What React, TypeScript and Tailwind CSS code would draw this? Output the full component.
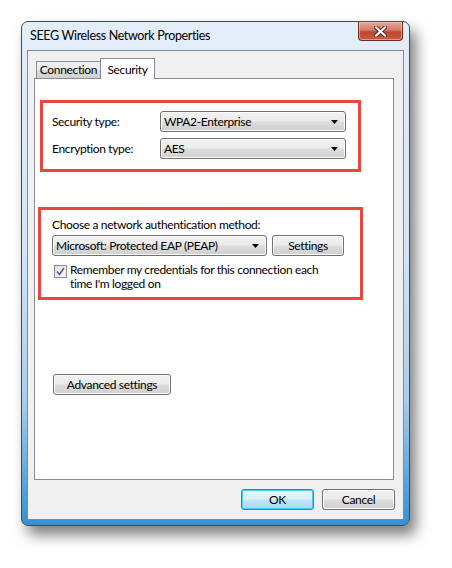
import React from "react";

const font = { fontFamily: 'Lato, "Noto Sans", "Liberation Sans", sans-serif' };

function Arrow() {
  return (
    <svg width="7" height="4" viewBox="0 0 7 4" className="shrink-0">
      <path d="M0 0h7L3.5 4z" fill="#000" />
    </svg>
  );
}

function Combo({ value, width }: { value: string; width: string }) {
  return (
    <div
      className={`${width} h-[21px] flex items-center justify-between pl-[3px] pr-[7px] border border-[#707070] rounded-[3px] bg-[linear-gradient(to_bottom,#f2f2f2_0%,#ebebeb_48%,#dddddd_52%,#cfcfcf_100%)] shadow-[inset_0_0_0_1px_#fcfcfc] text-[12px] text-black`}
    >
      <span>{value}</span>
      <Arrow />
    </div>
  );
}

function Button({ label, width, primary }: { label: string; width: string; primary?: boolean }) {
  return (
    <div
      className={`${width} h-[21px] flex items-center justify-center border rounded-[3px] text-[12px] text-black ${
        primary
          ? "border-[#3c7fb1] bg-[linear-gradient(to_bottom,#eaf6fd_0%,#d9f0fc_48%,#bee6fd_52%,#a7d9f5_100%)] shadow-[inset_0_0_0_1px_#48d1f8]"
          : "border-[#707070] bg-[linear-gradient(to_bottom,#f2f2f2_0%,#ebebeb_48%,#dddddd_52%,#cfcfcf_100%)] shadow-[inset_0_0_0_1px_#fcfcfc]"
      }`}
    >
      {label}
    </div>
  );
}

export default function App() {
  return (
    <div className="w-[452px] h-[568px] bg-white pt-[21px] pl-[21px] tracking-[-0.35px]" style={font}>
      <div className="w-[389px] h-[505px] flex flex-col border border-[#3d4a57] rounded-[7px] bg-[linear-gradient(to_bottom,#e4eef9_0%,#d3e5f5_45%,#a9cdeb_75%,#4d9fd9_94%,#3a90d0_100%)] shadow-[6px_9px_14px_rgba(0,0,0,0.5)]">
        {/* title bar */}
        <div className="h-[28px] flex items-start justify-between pl-[8px] pr-[6px]">
          <div className="pt-[6px] text-[12.5px] leading-[15px] text-black">SEEG Wireless Network Properties</div>
          <div className="w-[45px] h-[19px] flex items-center justify-center rounded-b-[4px] border border-t-0 border-[#6c2a20] bg-[linear-gradient(to_bottom,#e8a698_0%,#d37a66_45%,#c0462f_55%,#c85a3f_100%)] shadow-[inset_0_0_0_1px_rgba(255,220,210,0.5)]">
            <svg width="13" height="11" viewBox="0 0 13 11">
              <path d="M2 1.5l9 8M11 1.5l-9 8" stroke="#4a2a26" strokeWidth="4" strokeLinecap="square" />
              <path d="M2 1.5l9 8M11 1.5l-9 8" stroke="#ffffff" strokeWidth="2.2" strokeLinecap="square" />
            </svg>
          </div>
        </div>

        {/* client area */}
        <div className="mx-[5px] mb-[5px] flex-1 flex flex-col border border-[#7f8a96] bg-[#f0f0f0] px-[6px] pt-[7px]">
          <div className="flex items-end pl-[2px] h-[20px]">
            <div className="w-[65px] h-[17px] flex items-center justify-center border border-b-0 border-[#898c95] bg-[linear-gradient(to_bottom,#f2f2f2_0%,#ebebeb_50%,#dddddd_51%,#cfcfcf_100%)] text-[12px] text-black">
              Connection
            </div>
            <div className="relative z-10 -mb-px -ml-px w-[55px] h-[21px] flex items-start justify-center pt-[2px] border border-b-0 border-[#898c95] bg-white text-[12px] text-black">
              Security
            </div>
          </div>

          <div className="w-[360px] h-[402px] border border-[#898c95] bg-white flex flex-col pt-[21px]">
            <div className="ml-[5px] w-[321px] h-[72px] border-[3px] border-[#e8473f] flex flex-col gap-[6px] pt-[8px]">
              <div className="flex items-center">
                <div className="w-[117px] pl-[9px] text-[12px] text-black">Security type:</div>
                <Combo value="WPA2-Enterprise" width="w-[186px]" />
              </div>
              <div className="flex items-center">
                <div className="w-[117px] pl-[9px] text-[12px] text-black">Encryption type:</div>
                <Combo value="AES" width="w-[186px]" />
              </div>
            </div>

            <div className="ml-[3px] mt-[35px] w-[325px] h-[93px] border-[3px] border-[#e8473f] flex flex-col pl-[11px] pt-[6px]">
              <div className="text-[12px] text-black leading-[17px]">Choose a network authentication method:</div>
              <div className="flex items-center gap-[5px] mt-[2px]">
                <Combo value="Microsoft: Protected EAP (PEAP)" width="w-[215px]" />
                <Button label="Settings" width="w-[72px]" />
              </div>
              <div className="flex items-start mt-[7px] pl-[2px]">
                <div className="w-[13px] h-[13px] mt-[2px] shrink-0 border border-[#8e8f8f] bg-[linear-gradient(135deg,#dcdcdc,#fefefe)] flex items-center justify-center">
                  <svg width="9" height="9" viewBox="0 0 9 9">
                    <path d="M1 4.5l2.5 3L8 1" stroke="#4a5f97" strokeWidth="1.6" fill="none" />
                  </svg>
                </div>
                <div className="pl-[3px] text-[12px] leading-[14px] text-black">
                  Remember my credentials for this connection each
                  <br />
                  time I'm logged on
                </div>
              </div>
            </div>

            <div className="ml-[18px] mt-[74px]">
              <Button label="Advanced settings" width="w-[118px]" />
            </div>
          </div>

          <div className="flex justify-end gap-[8px] mt-[9px] pr-[2px]">
            <Button label="OK" width="w-[73px]" primary />
            <Button label="Cancel" width="w-[73px]" />
          </div>
        </div>
      </div>
    </div>
  );
}
